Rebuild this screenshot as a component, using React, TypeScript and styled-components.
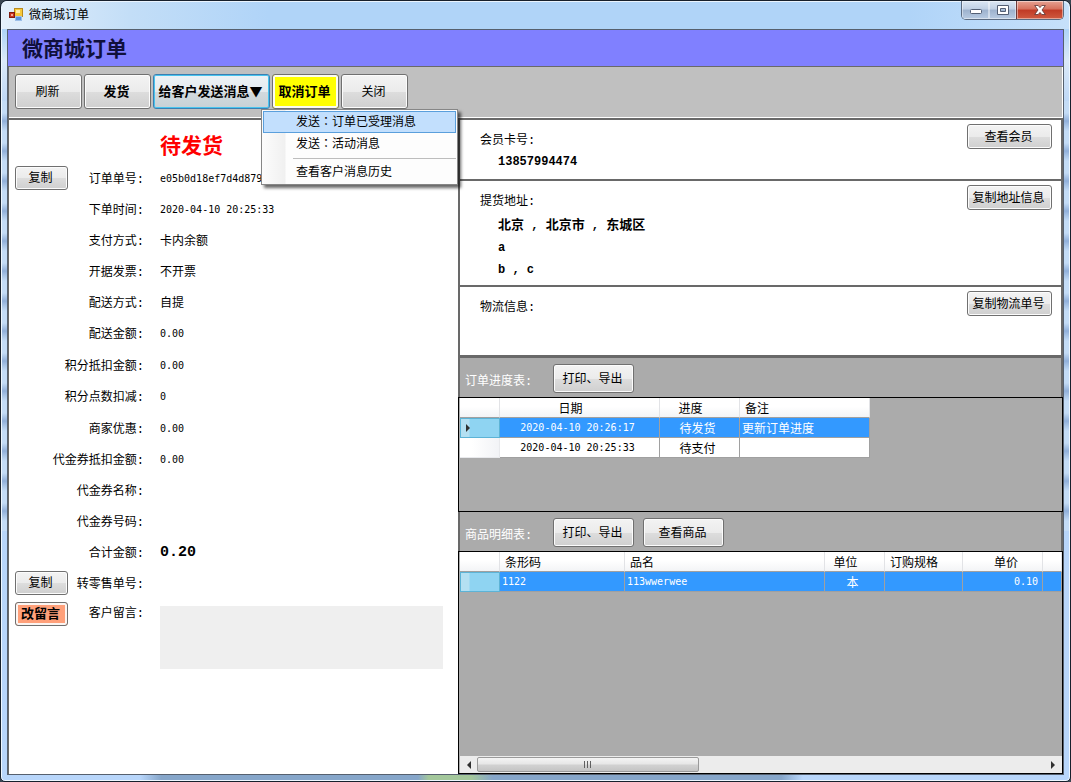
import React from "react";
import styled, { createGlobalStyle, css } from "styled-components";

const CJK = '"Noto Sans CJK SC", sans-serif';
const MONO = `"Liberation Mono", ${CJK}`;
const DIM = "#696969";

const GlobalStyle = createGlobalStyle`
  *, *::before, *::after { box-sizing: border-box; }
  body {
    margin: 0;
    background: #3a4652;
    color: #000;
    font: 12px/16px ${CJK};
  }
  button, textarea { font: inherit; color: inherit; margin: 0; padding: 0; }
  dl, dd, p, h1, h2, menu { margin: 0; padding: 0; }
`;

const Window = styled.div`
  min-height: 100vh;
  display: flex;
  flex-direction: column;
  padding: 0 6px 6px;
  border: 1px solid #17202c;
  border-radius: 7px 7px 5px 5px;
  box-shadow: inset 0 0 0 1px #eef7ff;
  background:
    linear-gradient(90deg, transparent 13%, #86a6ca 15%, #86a6ca 39%, #a3c79b 40%, #a3c79b 44%, #86a6ca 46%, #86a6ca 73%, transparent 75%) 0 100% / 100% 6px no-repeat,
    repeating-linear-gradient(180deg, #c4dcf6 0, #c4dcf6 12px, #91b0da 20px, #c4dcf6 30px) 0 100px / 100% 430px no-repeat,
    linear-gradient(180deg, #c9e1f8 0, #b0d4f8 14px, #b0d4f8 30px, #dbe9f8 60px, #b8d4f6 110px, #b8d6fb 100%);
`;

const TitleBar = styled.header`
  height: 28px;
  display: flex;
  align-items: flex-start;
  margin: 0 -5px;
  padding: 0 5px 0 7px;
  background: linear-gradient(90deg, #e4f0fb 0, #c3def7 12%, #b0d4f8 25%, #b0d4f8 85%, #c6e0fa 100%);
  box-shadow: inset 0 1px 0 #eaf4fe;
  border-radius: 6px 6px 0 0;
`;

const WindowTitle = styled.h1`
  flex: 1;
  padding: 5px 0 0 6px;
  font-size: 12px;
  font-weight: 400;
  line-height: 16px;
`;

const AppIcon = styled.svg`
  width: 14px;
  height: 14px;
  margin-top: 7px;
`;

const Captions = styled.div`
  display: flex;
  height: 19px;
  border: 1px solid #5b6b80;
  border-top: 0;
  border-radius: 0 0 5px 5px;
  overflow: hidden;
`;

const Caption = styled.button<{ $close?: boolean }>`
  width: ${(p) => (p.$close ? 47 : 27)}px;
  border: 0;
  border-left: ${(p) => (p.$close ? "1px solid #6c3a3a" : "0")};
  display: grid;
  place-items: center;
  background: ${(p) =>
    p.$close
      ? "linear-gradient(#e6a293 0, #d6705c 45%, #c03a25 50%, #cf5a40 100%)"
      : "linear-gradient(#dbe7f4 0, #c0d0e4 45%, #9db2cd 50%, #b8cbe2 100%)"};
  box-shadow: inset 0 0 0 1px rgba(255, 255, 255, 0.45);
`;

const Client = styled.div`
  flex: 1;
  display: flex;
  flex-direction: column;
  border: 1px solid #56606e;
  background: #fff;
`;

const Banner = styled.h2`
  height: 36px;
  padding: 2px 0 0 14px;
  background: #8080ff;
  color: #10103c;
  font-size: 21px;
  line-height: 31px;
  font-weight: 700;
`;

const Toolbar = styled.div`
  height: 54px;
  display: flex;
  gap: 2px;
  padding: 7px 6px;
  background: #c0c0c0;
  border: 1px solid ${DIM};
  border-width: 1px 0 2px 1px;
  box-shadow: inset -1px -1px 0 #fff;
`;

type Tone = "plain" | "focus" | "yellow" | "salmon";

const toneStyle = {
  plain: css``,
  focus: css`
    border-color: #3c7fb1;
    box-shadow: inset 0 0 0 1px #48c4ee;
    background: linear-gradient(#eef3f6 0, #e4eaee 50%, #d2dade 51%, #c8d1d6 100%);
  `,
  yellow: css`
    background: #ffff00;
    box-shadow: inset 0 0 0 2px #fbfbf0;
  `,
  salmon: css`
    background: #ffa07a;
    box-shadow: inset 0 0 0 2px #fbf5f2;
  `,
};

const Button = styled.button<{ $w: number; $h: number; $bold?: boolean; $tone?: Tone }>`
  flex: none;
  width: ${(p) => p.$w}px;
  height: ${(p) => p.$h}px;
  padding: 0 2px 2px 0;
  border: 1px solid #707070;
  border-radius: 3px;
  background: linear-gradient(#f3f3f3 0, #ebebeb 50%, #dddddd 51%, #cfcfcf 100%);
  box-shadow: inset 0 0 0 1px #fcfcfc;
  font-size: ${(p) => (p.$bold ? 13 : 12)}px;
  font-weight: ${(p) => (p.$bold ? 700 : 400)};
  line-height: 16px;
  white-space: nowrap;
  ${(p) => toneStyle[p.$tone ?? "plain"]}
`;

const MenuAnchor = styled.div`
  position: relative;
`;

const DropMenu = styled.menu`
  position: absolute;
  z-index: 5;
  top: 35px;
  left: 108px;
  width: 197px;
  padding: 1px;
  border: 1px solid #868686;
  background: linear-gradient(90deg, #fcfcfc 0, #f0f0f0 23px, #fdfdfd 24px);
  box-shadow: 3px 3px 3px rgba(0, 0, 0, 0.6);
`;

const MenuItem = styled.button<{ $active?: boolean }>`
  display: block;
  width: 100%;
  height: 22px;
  padding: 0 0 2px 32px;
  text-align: left;
  line-height: 18px;
  border: 1px solid ${(p) => (p.$active ? "#5a9fdc" : "transparent")};
  background: ${(p) => (p.$active ? "#c2dffd" : "transparent")};
`;

const MenuRule = styled.hr`
  height: 1px;
  margin: 3px 0 2px 30px;
  border: 0;
  background: #bdbdbd;
`;

const WideColon = styled.span`
  font-family: "Noto Sans CJK TC", sans-serif;
`;

const Body = styled.main`
  flex: 1;
  display: grid;
  grid-template-columns: 450px minmax(0, 1fr);
`;

const OrderPane = styled.section`
  padding: 8px 15px 0 6px;
  border-left: 1px solid ${DIM};
`;

const Status = styled.p`
  padding-left: 145px;
  color: #ff0000;
  font-size: 21px;
  line-height: 32px;
  font-weight: 700;
`;

const Groups = styled.div`
  display: flex;
  flex-direction: column;
  gap: 1px;
  padding-top: 2px;
`;

const Field = styled.div<{ $note?: boolean }>`
  display: flex;
  align-items: ${(p) => (p.$note ? "flex-start" : "center")};
  height: ${(p) => (p.$note ? "auto" : "31px")};
  padding-top: ${(p) => (p.$note ? 3 : 0)}px;
`;

const FieldHead = styled.dt<{ $note?: boolean }>`
  flex: none;
  width: 129px;
  display: flex;
  align-items: ${(p) => (p.$note ? "flex-start" : "center")};
  font-family: ${MONO};

  > button {
    font-family: ${CJK};
  }

  > :last-child {
    margin-left: auto;
    padding-top: 4px;
  }
`;

const FieldValue = styled.dd<{ $latin?: boolean; $total?: boolean }>`
  flex: 1;
  padding-left: 16px;
  white-space: nowrap;
  ${(p) => p.$latin && css`font: 10px/16px "DejaVu Sans Mono", monospace; padding-top: 2px;`}
  ${(p) => p.$total && css`font: 700 15px/16px "Liberation Mono", monospace; padding-top: 2px;`}
`;

const Note = styled.textarea`
  display: block;
  width: 100%;
  height: 63px;
  margin-top: 4px;
  border: 0;
  background: #efefef;
  resize: none;
`;

const DetailPane = styled.div`
  display: flex;
  flex-direction: column;
  min-width: 0;
`;

const Card = styled.section<{ $h: number; $line?: number }>`
  min-height: ${(p) => p.$h}px;
  display: flex;
  align-items: flex-start;
  justify-content: space-between;
  padding: 4px 9px 0 20px;
  border: solid ${DIM};
  border-width: 0 2px ${(p) => p.$line ?? 2}px;
  background: #fff;
`;

const CardText = styled.div<{ $gap?: number }>`
  display: flex;
  flex-direction: column;
  gap: ${(p) => p.$gap ?? 2}px;
  padding-top: 9px;
  font-family: ${MONO};
`;

const CardValue = styled.div`
  padding-left: 18px;
  font-weight: 700;
  line-height: 22px;
`;

const City = styled.span`
  font-size: 13px;
`;

const Bar = styled.div`
  height: 39px;
  display: flex;
  align-items: center;
  gap: 9px;
  padding: 2px 0 0 5px;
  border: solid ${DIM};
  border-width: 0 2px;
  background: #ababab;
`;

const BarLabel = styled.span`
  width: 79px;
  padding-top: 6px;
  color: #fff;
  font-family: ${MONO};
  line-height: 16px;
`;

const GridBox = styled.div<{ $h?: number }>`
  ${(p) => (p.$h ? css`height: ${p.$h}px;` : css`flex: 1;`)}
  display: flex;
  flex-direction: column;
  justify-content: space-between;
  min-width: 0;
  padding-left: 1px;
  border: 1px solid #000;
  background: #ababab;
  overflow: hidden;
`;

const Table = styled.table<{ $fill?: boolean }>`
  width: ${(p) => (p.$fill ? "100%" : "410px")};
  table-layout: fixed;
  border-collapse: separate;
  border-spacing: 0;
`;

type Align = "left" | "center" | "right";

const HeadCell = styled.th<{ $align: Align }>`
  height: 20px;
  padding: 0 ${(p) => (p.$align === "right" ? 24 : p.$align === "center" ? 18 : 0)}px 0
    ${(p) => (p.$align === "left" ? 5 : 0)}px;
  border-right: 1px solid #e2e3e6;
  border-bottom: 1px solid #a0a0a0;
  background: linear-gradient(#ffffff 0, #ffffff 45%, #f3f4f6 100%);
  font-weight: 400;
  line-height: 18px;
  text-align: ${(p) => p.$align};
  white-space: nowrap;
`;

const Cell = styled.td<{ $align: Align; $on?: boolean; $latin?: boolean }>`
  height: 20px;
  padding: 0 ${(p) => (p.$align === "left" ? 0 : 4)}px 0 ${(p) => (p.$align === "left" ? 2 : 0)}px;
  border-right: 1px solid #a0a0a0;
  border-bottom: 1px solid #a0a0a0;
  background: ${(p) => (p.$on ? "#3399ff" : "#fff")};
  color: ${(p) => (p.$on ? "#fff" : "#000")};
  font-size: ${(p) => (p.$latin ? 10 : 12)}px;
  font-family: ${(p) => (p.$latin ? '"DejaVu Sans Mono", monospace' : CJK)};
  line-height: 18px;
  text-align: ${(p) => p.$align};
  white-space: nowrap;
`;

const RowHead = styled.td<{ $on?: boolean }>`
  height: 20px;
  padding: 0 0 0 5px;
  border: 1px solid ${(p) => (p.$on ? "#5cb3d6" : "#e8e9ec")};
  border-width: ${(p) => (p.$on ? "1px" : "0 1px 1px 0")};
  background: ${(p) =>
    p.$on
      ? "linear-gradient(90deg, #b4e0f2 0, #b4e0f2 8px, #8fd4f2 9px, #8fd4f2 100%)"
      : "linear-gradient(90deg, #fff 0, #fff 30%, #f2f3f6 100%)"};
  line-height: 0;
`;

const ScrollTrack = styled.div`
  height: 17px;
  display: flex;
  align-items: center;
  background: #ececec;
`;

const ScrollArrow = styled.button`
  width: 17px;
  height: 17px;
  border: 0;
  background: none;
  display: grid;
  place-items: center;
`;

const ScrollLane = styled.div`
  flex: 1;
`;

const Thumb = styled.div`
  width: 39%;
  height: 15px;
  display: grid;
  place-items: center;
  border: 1px solid #9a9a9a;
  border-radius: 2px;
  background: linear-gradient(#f4f4f4 0, #e6e6e6 48%, #d2d2d2 52%, #c4c4c4 100%);
`;

const Arrow = ({ flip }: { flip?: boolean }) => (
  <svg width="5" height="8" viewBox="0 0 5 8" aria-hidden="true">
    <path d={flip ? "M5 0v8L1 4z" : "M0 0v8l4-4z"} fill="#303030" />
  </svg>
);

type FieldData = { label: string; value?: string; latin?: boolean; total?: boolean; copy?: boolean };

const groups: FieldData[][] = [
  [
    { label: "订单单号:", value: "e05b0d18ef7d4d879", latin: true, copy: true },
    { label: "下单时间:", value: "2020-04-10 20:25:33", latin: true },
    { label: "支付方式:", value: "卡内余额" },
    { label: "开据发票:", value: "不开票" },
    { label: "配送方式:", value: "自提" },
    { label: "配送金额:", value: "0.00", latin: true },
  ],
  [
    { label: "积分抵扣金额:", value: "0.00", latin: true },
    { label: "积分点数扣减:", value: "0", latin: true },
  ],
  [
    { label: "商家优惠:", value: "0.00", latin: true },
    { label: "代金券抵扣金额:", value: "0.00", latin: true },
    { label: "代金券名称:" },
    { label: "代金券号码:" },
    { label: "合计金额:", value: "0.20", total: true },
    { label: "转零售单号:", copy: true },
  ],
];

type Column = { title: string; width?: number; align: Align; head: Align; latin?: boolean };

const progressColumns: Column[] = [
  { title: "日期", width: 160, align: "center", head: "center", latin: true },
  { title: "进度", width: 80, align: "center", head: "center" },
  { title: "备注", width: 130, align: "left", head: "left" },
];
const progressRows = [
  ["2020-04-10 20:26:17", "待发货", "更新订单进度"],
  ["2020-04-10 20:25:33", "待支付", ""],
];

const goodsColumns: Column[] = [
  { title: "条形码", width: 125, align: "left", head: "left", latin: true },
  { title: "品名", width: 200, align: "left", head: "left", latin: true },
  { title: "单位", width: 60, align: "center", head: "center" },
  { title: "订购规格", width: 78, align: "left", head: "left" },
  { title: "单价", width: 80, align: "right", head: "right", latin: true },
  { title: "", align: "left", head: "left" },
];
const goodsRows = [["1122", "113wwerwee", "本", "", "0.10", ""]];

function DataGrid({ columns, rows, fill, marker }: { columns: Column[]; rows: string[][]; fill?: boolean; marker?: boolean }) {
  return (
    <Table $fill={fill}>
      <colgroup>
        <col width={40} />
        {columns.map((c, i) => (
          <col key={i} width={c.width} />
        ))}
      </colgroup>
      <thead>
        <tr>
          <HeadCell $align="left" />
          {columns.map((c, i) => (
            <HeadCell key={i} $align={c.head}>{c.title}</HeadCell>
          ))}
        </tr>
      </thead>
      <tbody>
        {rows.map((row, r) => (
          <tr key={r}>
            <RowHead $on={r === 0}>{r === 0 && marker && <Arrow />}</RowHead>
            {row.map((text, i) => (
              <Cell key={i} $on={r === 0} $align={columns[i].align} $latin={columns[i].latin}>{text}</Cell>
            ))}
          </tr>
        ))}
      </tbody>
    </Table>
  );
}

export default function App() {
  return (
    <>
      <GlobalStyle />
      <Window>
        <TitleBar>
          <AppIcon viewBox="0 0 14 14" aria-hidden="true">
            <rect x="5.5" y="0.5" width="8" height="8" fill="#f6c83c" stroke="#b98a1c" />
            <rect x="7" y="2" width="4" height="3" fill="#fdeeb0" />
            <rect x="6.5" y="8.5" width="6" height="4" fill="#5b93dc" stroke="#9dbfe8" />
            <rect x="0.5" y="4.5" width="5" height="5" fill="#c8321e" stroke="#7e1c10" />
            <rect x="2" y="6" width="2" height="2" fill="#f3a594" />
          </AppIcon>
          <WindowTitle>微商城订单</WindowTitle>
          <Captions>
            <Caption aria-label="最小化">
              <svg width="12" height="10" viewBox="0 0 12 10">
                <rect x="0.5" y="4.5" width="11" height="4" rx="1" fill="#fff" stroke="#535f74" />
              </svg>
            </Caption>
            <Caption aria-label="最大化">
              <svg width="12" height="10" viewBox="0 0 12 10">
                <path d="M.5.5h11v9H.5zM3.5 3.5v3h5v-3z" fill="#fff" stroke="#535f74" fillRule="evenodd" />
              </svg>
            </Caption>
            <Caption $close aria-label="关闭窗口">
              <svg width="12" height="10" viewBox="0 0 12 10">
                <path d="M.7.5h3.500L6 2.600 7.800.5h3.500L8 5l3.300 4.500H7.800L6 7.400 4.200 9.500H.7L4 5z" fill="#fff" stroke="#5a3434" strokeWidth=".8" />
              </svg>
            </Caption>
          </Captions>
        </TitleBar>

        <Client>
          <Banner>微商城订单</Banner>
          <Toolbar>
            <Button $w={67} $h={35}>刷新</Button>
            <Button $w={67} $h={35} $bold>发货</Button>
            <MenuAnchor>
              <Button $w={117} $h={35} $bold $tone="focus" aria-haspopup="menu" aria-expanded="true">给客户发送消息▼</Button>
              <DropMenu>
                <MenuItem $active>发送<WideColon>：</WideColon>订单已受理消息</MenuItem>
                <MenuItem>发送<WideColon>：</WideColon>活动消息</MenuItem>
                <MenuRule />
                <MenuItem>查看客户消息历史</MenuItem>
              </DropMenu>
            </MenuAnchor>
            <Button $w={67} $h={35} $bold $tone="yellow">取消订单</Button>
            <Button $w={67} $h={35}>关闭</Button>
          </Toolbar>

          <Body>
            <OrderPane>
              <Status>待发货</Status>
              <Groups>
                {groups.map((fields, g) => (
                  <dl key={g}>
                    {fields.map((f) => (
                      <Field key={f.label}>
                        <FieldHead>
                          {f.copy && <Button $w={53} $h={24}>复制</Button>}
                          <span>{f.label}</span>
                        </FieldHead>
                        <FieldValue $latin={f.latin} $total={f.total}>{f.value}</FieldValue>
                      </Field>
                    ))}
                  </dl>
                ))}
                <dl>
                  <Field $note>
                    <FieldHead $note>
                      <Button $w={53} $h={24} $bold $tone="salmon">改留言</Button>
                      <label htmlFor="note">客户留言:</label>
                    </FieldHead>
                    <FieldValue>
                      <Note id="note" readOnly />
                    </FieldValue>
                  </Field>
                </dl>
              </Groups>
            </OrderPane>

            <DetailPane>
              <Card $h={61}>
                <CardText>
                  <span>会员卡号:</span>
                  <CardValue>13857994474</CardValue>
                </CardText>
                <Button $w={85} $h={25}>查看会员</Button>
              </Card>
              <Card $h={106}>
                <CardText $gap={5}>
                  <span>提货地址:</span>
                  <CardValue>
                    <p><City>北京</City> , <City>北京市</City> , <City>东城区</City></p>
                    <p>a</p>
                    <p>b , c</p>
                  </CardValue>
                </CardText>
                <Button $w={85} $h={25}>复制地址信息</Button>
              </Card>
              <Card $h={71} $line={3}>
                <CardText>
                  <span>物流信息:</span>
                </CardText>
                <Button $w={85} $h={25}>复制物流单号</Button>
              </Card>

              <Bar>
                <BarLabel>订单进度表:</BarLabel>
                <Button $w={81} $h={29}>打印、导出</Button>
              </Bar>
              <GridBox $h={115}>
                <DataGrid columns={progressColumns} rows={progressRows} marker />
              </GridBox>

              <Bar>
                <BarLabel>商品明细表:</BarLabel>
                <Button $w={81} $h={29}>打印、导出</Button>
                <Button $w={81} $h={29}>查看商品</Button>
              </Bar>
              <GridBox>
                <DataGrid columns={goodsColumns} rows={goodsRows} fill />
                <ScrollTrack>
                  <ScrollArrow aria-label="向左滚动"><Arrow flip /></ScrollArrow>
                  <ScrollLane>
                    <Thumb>
                      <svg width="9" height="7" viewBox="0 0 9 7" aria-hidden="true">
                        <path d="M1.500 0v7M4.500 0v7M7.500 0v7" stroke="#606060" />
                      </svg>
                    </Thumb>
                  </ScrollLane>
                  <ScrollArrow aria-label="向右滚动"><Arrow /></ScrollArrow>
                </ScrollTrack>
              </GridBox>
            </DetailPane>
          </Body>
        </Client>
      </Window>
    </>
  );
}
